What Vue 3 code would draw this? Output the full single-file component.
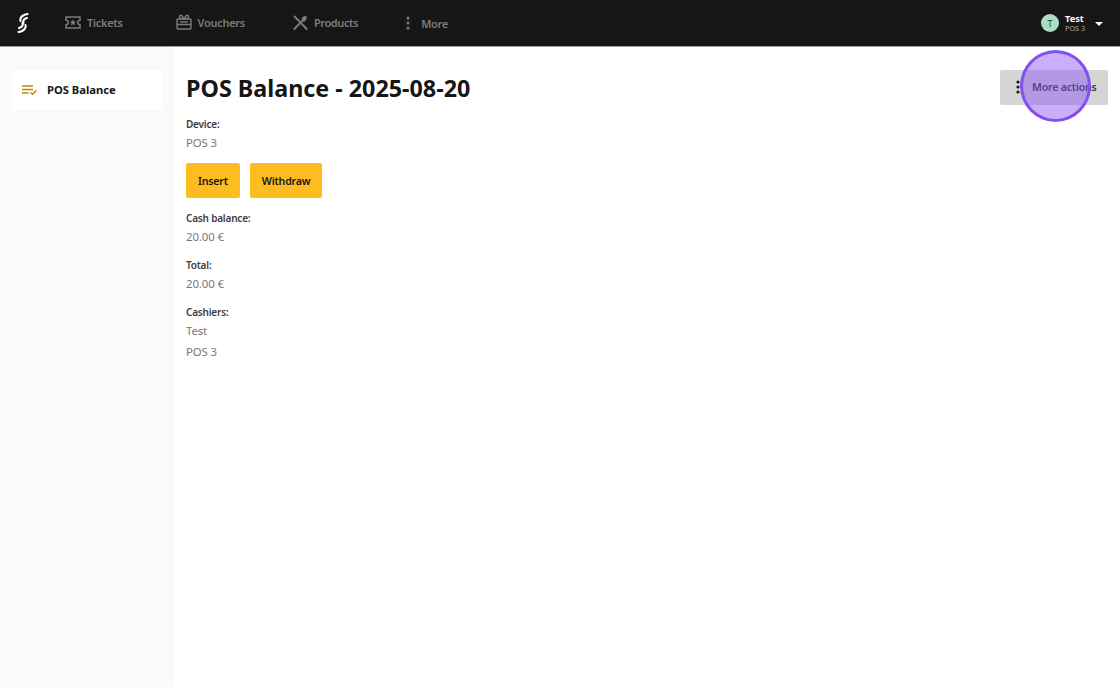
<script setup>
const navItems = [
  { label: 'Tickets', icon: 'ticket' },
  { label: 'Vouchers', icon: 'gift' },
  { label: 'Products', icon: 'cutlery' },
]
const cashiers = ['Test', 'POS 3']
</script>

<template>
  <div class="page">
    <header class="topbar">
      <svg class="logo" viewBox="0 0 12 20" width="12" height="20" fill="none" stroke="#fff" stroke-width="2.100" stroke-linecap="round">
        <path d="M10.500 1 C6 1.500 2.500 4.500 3.500 8" />
        <path d="M10 5 C7.500 5.500 5.500 7.500 6.500 10" />
        <path d="M1.500 19 C6 18.500 9.500 15.500 8.500 12" />
        <path d="M2 15 C4.500 14.500 6.500 12.500 5.500 10" />
      </svg>
      <nav class="nav">
        <a v-for="item in navItems" :key="item.label" class="nav-item">
          <svg v-if="item.icon === 'ticket'" viewBox="0 0 16 13" width="16" height="13" fill="none" stroke="#7c7c7c" stroke-width="1.500">
            <path d="M1 1h14v3.300a2.200 2.200 0 0 0 0 4.400V12H1V8.700a2.200 2.200 0 0 0 0-4.400z" />
            <path d="M8 3.300l1 2.100 2.200.2-1.700 1.500.5 2.200L8 8.200 6 9.300l.5-2.200-1.700-1.500L7 5.400z" fill="#7c7c7c" stroke="none" />
          </svg>
          <svg v-else-if="item.icon === 'gift'" viewBox="0 0 16 16" width="16" height="16" fill="none" stroke="#7c7c7c" stroke-width="1.400">
            <rect x="1" y="5" width="14" height="10" rx="1" />
            <path d="M1 10.500h14M8 5C6 1 4 .5 3.500 2.200S5 5 8 5c3 0 5-1.100 4.500-2.800S10 1 8 5z" />
            <path d="M4 8h8" />
          </svg>
          <svg v-else viewBox="0 0 16 15" width="16" height="15" fill="none" stroke="#7c7c7c" stroke-width="1.900" stroke-linecap="round">
            <path d="M1.300 14 9.200 5.800M13.700 14 1.600 1.500" />
            <path d="M8.600 5.300C8.300 3 10.800.6 13 .9c1.400 1.400.6 4.400-1.600 5.500-1 .5-2 .3-2.800-1.100z" fill="#7c7c7c" stroke="none" />
          </svg>
          <span>{{ item.label }}</span>
        </a>
        <a class="nav-item nav-more">
          <svg viewBox="0 0 4 14" width="4" height="14" fill="#7c7c7c">
            <circle cx="2" cy="2" r="1.500" /><circle cx="2" cy="7" r="1.500" /><circle cx="2" cy="12" r="1.500" />
          </svg>
          <span>More</span>
        </a>
      </nav>
      <div class="user">
        <div class="avatar">T</div>
        <div class="user-text">
          <div class="user-name">Test</div>
          <div class="user-device">POS 3</div>
        </div>
        <span class="caret"></span>
      </div>
    </header>

    <div class="body">
      <aside class="sidebar">
        <div class="side-item">
          <svg viewBox="0 0 15 10" width="15" height="10" fill="none" stroke="#b8860b" stroke-width="1.400">
            <path d="M0 1h11M0 4.500h11M0 8h6.500M8.500 7.500l2 1.800 4-4" />
          </svg>
          <span>POS Balance</span>
        </div>
      </aside>
      <main class="content">
        <div class="head">
          <h1>POS Balance - 2025-08-20</h1>
          <button class="more-btn">
            <svg viewBox="0 0 4 14" width="4" height="14" fill="#1a1a1a">
              <circle cx="2" cy="2" r="1.600" /><circle cx="2" cy="7" r="1.600" /><circle cx="2" cy="12" r="1.600" />
            </svg>
            <span>More actions</span>
          </button>
        </div>
        <div class="field">
          <div class="label">Device:</div>
          <div class="value">POS 3</div>
        </div>
        <div class="actions">
          <button class="btn">Insert</button>
          <button class="btn">Withdraw</button>
        </div>
        <div class="field">
          <div class="label">Cash balance:</div>
          <div class="value">20.00 €</div>
        </div>
        <div class="field">
          <div class="label">Total:</div>
          <div class="value">20.00 €</div>
        </div>
        <div class="field">
          <div class="label">Cashiers:</div>
          <div v-for="c in cashiers" :key="c" class="value">{{ c }}</div>
        </div>
      </main>
    </div>
    <div class="spot"></div>
  </div>
</template>

<style>
html, body { margin: 0; background: #fff; }
</style>

<style scoped>
.page {
  position: relative;
  width: 1120px;
  height: 687px;
  overflow: hidden;
  font-family: "Noto Sans", "Open Sans", sans-serif;
  color: #161616;
  display: flex;
  flex-direction: column;
}
.topbar {
  height: 46px;
  flex: none;
  background: #161616;
  border-bottom: 1px solid #9a9a9a;
  box-sizing: content-box;
  display: flex;
  align-items: center;
  padding-left: 17px;
  padding-right: 17px;
}
.logo { flex: none; }
.nav { display: flex; align-items: center; margin-left: 36px; gap: 48px; margin-top: -2px; }
.nav-item {
  display: flex;
  align-items: center;
  gap: 6px;
  font-size: 11px;
  letter-spacing: -0.3px;
  font-weight: 600;
  color: #7c7c7c;
}
.nav-item:first-child { margin-right: 5px; }
.nav-item:nth-child(3) { gap: 5px; letter-spacing: -0.4px; }
.nav-more { gap: 11px; margin-top: 2px; margin-left: 0; }
.user { margin-left: auto; display: flex; align-items: center; }
.avatar {
  width: 18px;
  height: 18px;
  border-radius: 50%;
  background: #a9dfbf;
  color: #333;
  font-size: 9px;
  display: flex;
  align-items: center;
  justify-content: center;
}
.user-text { margin-left: 6px; margin-top: 1px; }
.user-name { font-size: 9.200px; line-height: 10px; font-weight: 700; color: #fff; }
.user-device { font-size: 7.200px; line-height: 9px; color: #aaa; }
.caret {
  margin-left: 10px;
  margin-top: 1px;
  width: 0;
  height: 0;
  border-left: 4px solid transparent;
  border-right: 4px solid transparent;
  border-top: 4px solid #fff;
}
.body { flex: 1; display: flex; min-height: 0; }
.sidebar {
  width: 174px;
  flex: none;
  box-sizing: border-box;
  background: #fafafa;
  padding: 23px 11px 0 12px;
}
.side-item {
  height: 40px;
  background: #fff;
  border-radius: 3px;
  display: flex;
  align-items: center;
  padding-left: 10px;
  padding-bottom: 1px;
  box-sizing: border-box;
  gap: 10px;
  font-size: 11.200px;
  font-weight: 700;
}
.content { flex: 1; padding: 0 12px 0 12px; }
.head {
  display: flex;
  justify-content: space-between;
  align-items: center;
  height: 35px;
  margin-top: 23px;
  margin-bottom: 10px;
}
h1 { margin: 0; padding-top: 2px; font-size: 23.300px; font-weight: 700; line-height: 35px; }
.more-btn {
  width: 108px;
  height: 35px;
  border: 0;
  border-radius: 2px;
  background: #d5d5d5;
  display: flex;
  align-items: center;
  padding: 0 0 1px 16px;
  gap: 12px;
  font: 600 10.600px "Noto Sans", sans-serif;
  letter-spacing: -0.2px;
  color: #333;
  white-space: nowrap;
}
.field { margin-bottom: 10px; }
.label { font-size: 10px; font-weight: 600; letter-spacing: -0.2px; line-height: 18px; color: #3d3d3d; }
.value { font-size: 11.400px; letter-spacing: -0.1px; line-height: 19px; color: #777; }
.value + .value { margin-top: 2px; }
.actions { display: flex; gap: 10px; margin: 11px 0; }
.btn {
  height: 35px;
  padding: 0 12px;
  border: 0;
  border-radius: 2px;
  background: #fdbd21;
  font: 600 10.600px "Noto Sans", sans-serif;
  letter-spacing: -0.2px;
  color: #161616;
}
.spot {
  position: absolute;
  left: 1020px;
  top: 50px;
  width: 71px;
  height: 72px;
  box-sizing: border-box;
  border-radius: 50%;
  border: 3px solid #8250f0;
  background: rgba(137, 80, 245, 0.45);
}
</style>
